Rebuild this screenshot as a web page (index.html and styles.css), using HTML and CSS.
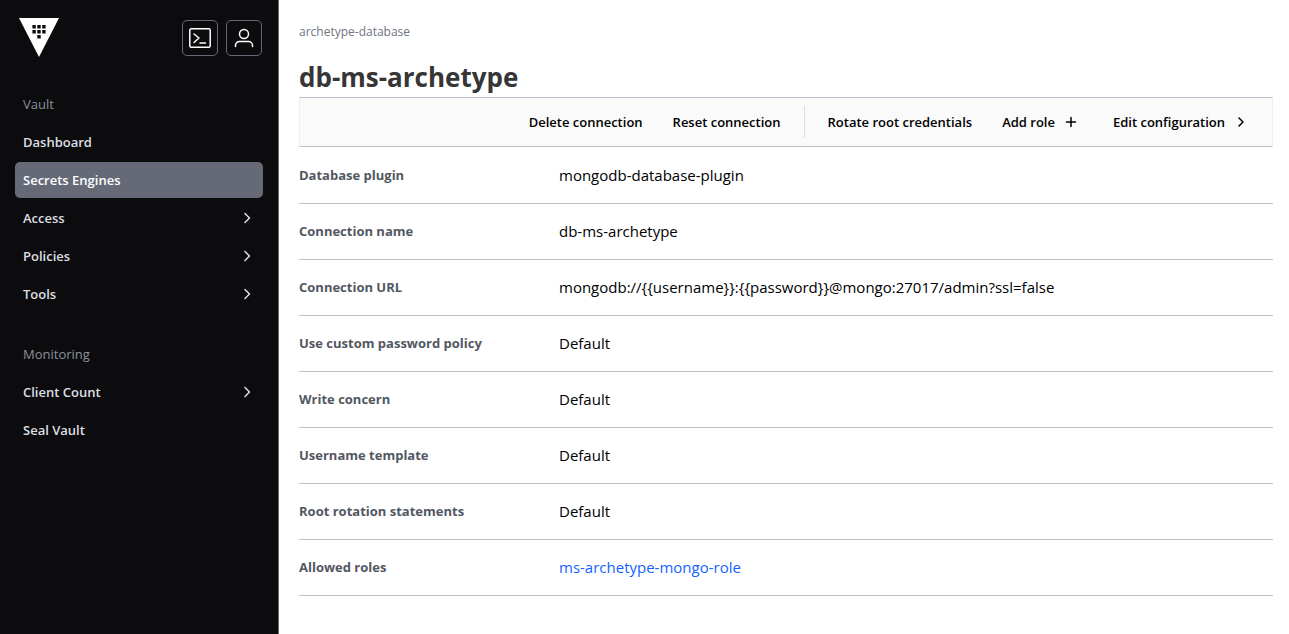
FILE: index.html
```html
<!DOCTYPE html>
<html lang="en">
<head>
<meta charset="utf-8">
<title>db-ms-archetype - Vault</title>
<meta name="viewport" content="width=device-width, initial-scale=1">
<link rel="stylesheet" href="styles.css">
</head>
<body class="app">
<aside class="sidebar">
  <header class="sidebar-header">
    <a class="logo" href="#" aria-label="Vault home">
      <svg width="40" height="40" viewBox="0 0 40 40">
        <path fill="#fff" d="M0 0h40L20 39z"/>
        <path fill="#0c0c0e" d="M13.4 7h3.4v3.4h-3.4zM18.3 7h3.4v3.4h-3.4zM23.2 7h3.4v3.4h-3.4zM13.4 12h3.4v3.4h-3.4zM18.3 12h3.4v3.4h-3.4zM23.2 12h3.4v3.4h-3.4zM18.3 17h3.4v3.4h-3.4z"/>
      </svg>
    </a>
    <div class="header-actions">
      <button class="icon-button" type="button" aria-label="Console">
        <svg width="24" height="24" viewBox="0 0 24 24"><rect x="1.8" y="2.8" width="20.4" height="18.4" rx="1.5"/><path d="M6 8l5 4-5 4.500M12 17h5.500"/></svg>
      </button>
      <button class="icon-button" type="button" aria-label="User menu">
        <svg width="24" height="24" viewBox="0 0 24 24"><circle cx="12" cy="8" r="4.500"/><path d="M3.500 20.500v-1a4 4 0 0 1 4-4h9a4 4 0 0 1 4 4v1"/></svg>
      </button>
    </div>
  </header>
  <nav class="nav" aria-label="Main">
    <section class="nav-group">
      <h2 class="nav-title">Vault</h2>
      <a class="nav-link" href="#">Dashboard</a>
      <a class="nav-link nav-link-active" href="#" aria-current="page">Secrets Engines</a>
      <a class="nav-link" href="#">Access <svg class="chevron" width="16" height="16" viewBox="0 0 16 16"><path d="M6 3.500L10.500 8 6 12.500"/></svg></a>
      <a class="nav-link" href="#">Policies <svg class="chevron" width="16" height="16" viewBox="0 0 16 16"><path d="M6 3.500L10.500 8 6 12.500"/></svg></a>
      <a class="nav-link" href="#">Tools <svg class="chevron" width="16" height="16" viewBox="0 0 16 16"><path d="M6 3.500L10.500 8 6 12.500"/></svg></a>
    </section>
    <section class="nav-group">
      <h2 class="nav-title">Monitoring</h2>
      <a class="nav-link" href="#">Client Count <svg class="chevron" width="16" height="16" viewBox="0 0 16 16"><path d="M6 3.500L10.500 8 6 12.500"/></svg></a>
      <a class="nav-link" href="#">Seal Vault</a>
    </section>
  </nav>
</aside>
<main class="content">
  <nav class="breadcrumb" aria-label="Breadcrumb"><a href="#">archetype-database</a></nav>
  <h1 class="title">db-ms-archetype</h1>
  <div class="toolbar">
    <button class="action" type="button">Delete connection</button>
    <button class="action" type="button">Reset connection</button>
    <span class="separator"></span>
    <button class="action" type="button">Rotate root credentials</button>
    <a class="action action-link" href="#">Add role <svg class="chevron" width="16" height="16" viewBox="0 0 16 16"><path d="M8 3.500v9M3.500 8h9"/></svg></a>
    <a class="action action-link" href="#">Edit configuration <svg class="chevron" width="16" height="16" viewBox="0 0 16 16"><path d="M6 4l4 4-4 4"/></svg></a>
  </div>
  <dl class="details">
    <div class="row"><dt>Database plugin</dt><dd>mongodb-database-plugin</dd></div>
    <div class="row"><dt>Connection name</dt><dd>db-ms-archetype</dd></div>
    <div class="row"><dt>Connection URL</dt><dd>mongodb://{{username}}:{{password}}@mongo:27017/admin?ssl=false</dd></div>
    <div class="row"><dt>Use custom password policy</dt><dd>Default</dd></div>
    <div class="row"><dt>Write concern</dt><dd>Default</dd></div>
    <div class="row"><dt>Username template</dt><dd>Default</dd></div>
    <div class="row"><dt>Root rotation statements</dt><dd>Default</dd></div>
    <div class="row"><dt>Allowed roles</dt><dd><a class="role-link" href="#">ms-archetype-mongo-role</a></dd></div>
  </dl>
</main>
</body>
</html>
```
FILE: styles.css
```css
* { box-sizing: border-box; }

.app {
  display: flex;
  min-height: 100vh;
  margin: 0;
  background: #fff;
  color: #000;
  font-family: "Segoe UI", "Open Sans", "Noto Sans", sans-serif;
  font-size: 15px;
}

a { color: inherit; text-decoration: none; }

svg { flex: none; display: block; }

.sidebar {
  flex: none;
  width: 279px;
  padding: 18px 15px;
  border-right: 1px solid #656a76;
  background: #0c0c0e;
}

.sidebar-header {
  display: flex;
  justify-content: space-between;
  padding: 0 1px 0 4px;
  margin-bottom: 28px;
}

.header-actions { display: flex; gap: 8px; padding-top: 2px; }

.icon-button {
  display: flex;
  align-items: center;
  justify-content: center;
  width: 36px;
  height: 36px;
  padding: 0;
  border: 1px solid #656a76;
  border-radius: 5px;
  background: transparent;
}

.icon-button svg {
  fill: none;
  stroke: #fff;
  stroke-width: 1.5;
  stroke-linecap: round;
  stroke-linejoin: round;
}

.nav { display: flex; flex-direction: column; gap: 24px; }

.nav-group { display: flex; flex-direction: column; gap: 2px; }

.nav-title,
.nav-link {
  display: flex;
  align-items: center;
  justify-content: space-between;
  height: 36px;
  margin: 0;
  padding: 0 8px;
  border-radius: 5px;
  color: #dedfe3;
  font-size: 13px;
  font-weight: 600;
}

.nav-title { color: #8c909c; font-weight: 500; }

.nav-link-active { background: #656a76; color: #fff; }

.chevron {
  fill: none;
  stroke: currentColor;
  stroke-width: 1.5;
  stroke-linecap: round;
  stroke-linejoin: round;
}

.content { flex: 1; min-width: 0; padding: 22px 16px 22px 20px; }

.breadcrumb { color: #6f7682; font-size: 12px; line-height: 20px; }

.title {
  margin: 18px 0 0;
  padding-bottom: 2px;
  color: #363636;
  font-size: 26px;
  font-weight: 700;
  line-height: 35px;
}

.toolbar {
  display: flex;
  align-items: center;
  justify-content: flex-end;
  height: 50px;
  padding-right: 4px;
  border: 1px solid #ebeef2;
  border-top-color: #bac1cc;
  border-bottom-color: #bac1cc;
  background: #fafafa;
}

.action {
  display: flex;
  align-items: center;
  gap: 8px;
  padding: 8px 15px;
  border: 0;
  background: transparent;
  color: #000;
  font: 600 13px/20px "Segoe UI", "Open Sans", "Noto Sans", sans-serif;
}

.action-link { padding-right: 19px; }

.separator { width: 1px; height: 32px; margin: 0 8px; background: #dbdde4; }

.details { margin: 1px 0 0; }

.row {
  display: grid;
  grid-template-columns: 260px 1fr;
  align-items: center;
  min-height: 56px;
  padding-bottom: 2px;
  border-bottom: 1px solid #bac1cc;
}

.row dt { color: #525761; font-size: 13px; font-weight: 700; }

.row dd { margin: 0; }

.role-link { color: #1563ff; }
```
